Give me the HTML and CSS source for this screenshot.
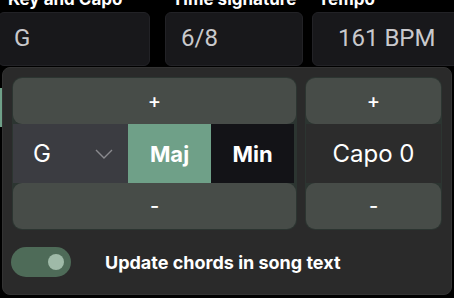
FILE: index.html
```html
<!DOCTYPE html>
<html>
<head>
<meta charset="utf-8">
<link rel="stylesheet" href="styles.css">
</head>
<body>
<div class="page">
  <div class="fields">
    <div class="field field-key">
      <div class="label">Key and Capo</div>
      <div class="input">G</div>
    </div>
    <div class="field field-time">
      <div class="label">Time signature</div>
      <div class="input">6/8</div>
    </div>
    <div class="field field-tempo">
      <div class="label">Tempo</div>
      <div class="input">161 BPM</div>
    </div>
  </div>
  <div class="behind-green"></div>

  <div class="popover">
    <div class="groups">
      <div class="group group-key">
        <button class="step step-up">+</button>
        <div class="mid">
          <div class="select">
            <span>G</span>
            <svg class="chev" width="18" height="10" viewBox="0 0 18 10"><path d="M1 1 L9 9 L17 1" fill="none" stroke="#8a8a8e" stroke-width="1.4"/></svg>
          </div>
          <div class="mode mode-on">Maj</div>
          <div class="mode mode-off">Min</div>
        </div>
        <button class="step step-down">-</button>
      </div>
      <div class="group group-capo">
        <button class="step step-up">+</button>
        <div class="mid mid-capo">Capo 0</div>
        <button class="step step-down">-</button>
      </div>
    </div>
    <div class="toggle-row">
      <div class="toggle"><div class="knob"></div></div>
      <div class="toggle-label">Update chords in song text</div>
    </div>
  </div>
</div>
</body>
</html>
```

FILE: styles.css
```css
* { box-sizing: border-box; }
html, body {
  margin: 0;
  padding: 0;
  background: #000;
  width: 454px;
  height: 298px;
  overflow: hidden;
  font-family: Inter, "Liberation Sans", sans-serif;
}
.page {
  position: relative;
  display: flow-root;
  width: 454px;
  height: 298px;
}
.fields {
  display: flex;
  margin-top: -11px;
  margin-left: -2px;
}
.field { display: flex; flex-direction: column; flex: none; }
.field-key { width: 152px; }
.field-time { width: 138px; margin-left: 15px; }
.field-tempo { width: 160px; margin-left: 9px; }
.label {
  font-size: 17px;
  font-weight: 700;
  line-height: 21px;
  color: #fff;
  padding-left: 10px;
  white-space: nowrap;
}
.field-time .label { padding-left: 7px; }
.field-tempo .label { padding-left: 6px; }
.input {
  margin-top: 2px;
  height: 54px;
  background: #18181b;
  border: 1px solid #222226;
  border-radius: 6px;
  color: #c9c9cc;
  font-family: Roboto, "Liberation Sans", sans-serif;
  font-size: 24px;
  display: flex;
  align-items: center;
  padding-left: 15px;
  padding-bottom: 3px;
}
.field-time .input { padding-left: 15px; }
.field-tempo .input { padding-left: 25px; }

.behind-green {
  position: absolute;
  left: 0;
  top: 88px;
  width: 3px;
  height: 39px;
  background: #6fa088;
}

.popover {
  position: absolute;
  left: 2px;
  top: 67px;
  width: 450px;
  height: 228px;
  background: #2a2a2a;
  border: 1px solid #333333;
  border-radius: 8px;
  padding: 9px 9px 0 9px;
}
.groups {
  display: flex;
  gap: 8px;
}
.group {
  display: flex;
  flex-direction: column;
  background: #2c3531;
  border-radius: 10px;
  padding: 1px;
  height: 153px;
}
.group-key { width: 285px; }
.group-capo { width: 137px; }
.step {
  border: none;
  margin: 0;
  background: #474c48;
  color: #fff;
  font-family: Inter, "Liberation Sans", sans-serif;
  font-size: 20px;
  font-weight: 500;
  height: 46px;
  border-radius: 9px;
  display: flex;
  align-items: center;
  justify-content: center;
  padding: 0;
}
.mid {
  display: flex;
  height: 59px;
  flex: none;
}
.group-key .mid { margin-right: 2px; }
.select {
  width: 115px;
  background: #3b3c41;
  display: flex;
  align-items: center;
  justify-content: space-between;
  padding: 0 15px 0 20px;
  color: #fff;
  font-size: 24px;
}
.chev { margin-top: 1px; }
.mode {
  width: 83px;
  display: flex;
  align-items: center;
  justify-content: center;
  color: #fff;
  font-size: 22px;
  font-weight: 700;
}
.mode-on { background: #6fa088; }
.mode-off { background: #131317; flex: 1; }
.mid-capo {
  background: #2c2c2c;
  color: #fff;
  font-size: 24px;
  align-items: center;
  justify-content: center;
}
.toggle-row {
  display: flex;
  align-items: center;
  margin-top: 17px;
  margin-left: -1px;
  gap: 34px;
}
.toggle {
  width: 60px;
  height: 30px;
  border-radius: 15px;
  background: #4e6b58;
  position: relative;
  flex: none;
}
.knob {
  position: absolute;
  right: 7px;
  top: 7px;
  width: 16px;
  height: 16px;
  border-radius: 50%;
  background: #9fbaa8;
}
.toggle-label {
  color: #fff;
  font-size: 18px;
  font-weight: 700;
  white-space: nowrap;
}
```
